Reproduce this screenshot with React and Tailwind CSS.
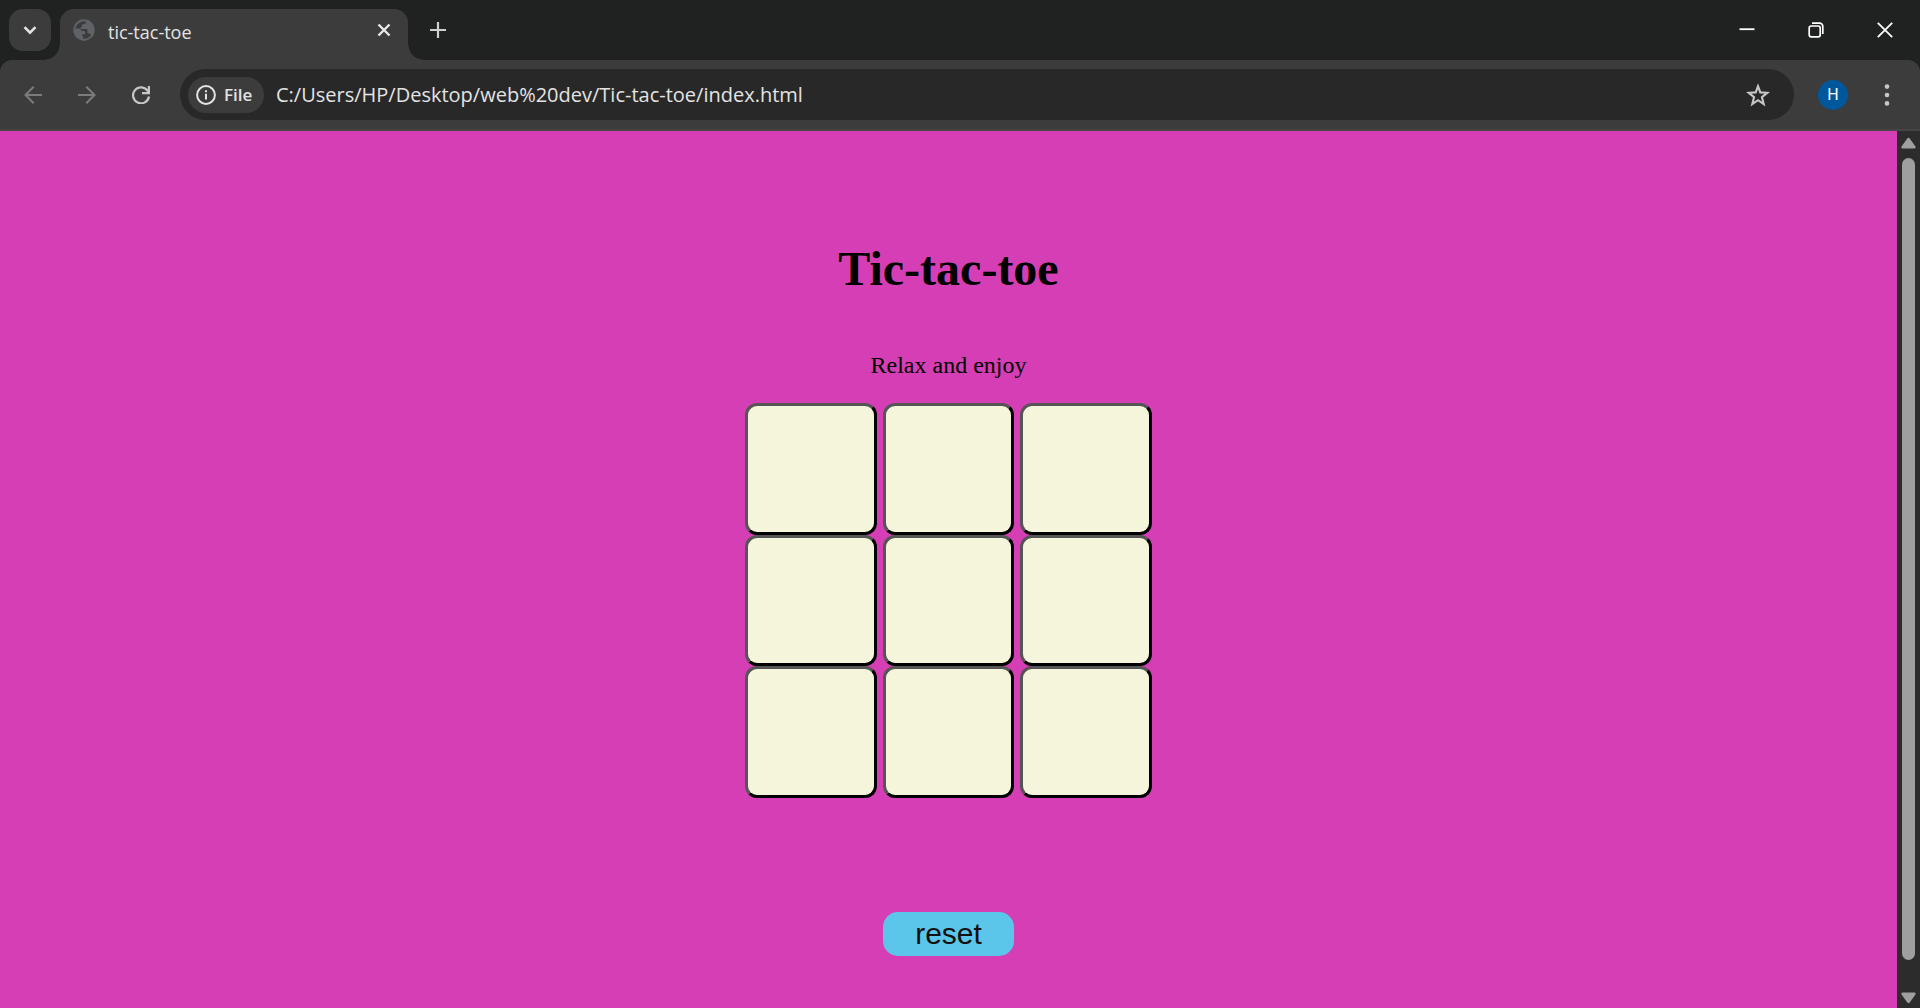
import React, { useState } from "react";

const uiFont = "font-['Segoe_UI','Open_Sans','Noto_Sans',sans-serif]";

function GlobeIcon() {
  return (
    <svg className="size-[22px]" viewBox="0 0 22 22" fill="none" aria-hidden="true">
      <circle cx="11" cy="11" r="9.7" stroke="#5f6368" strokeWidth="2" />
      <path
        d="M13 1.500v1.700c0 1.300-1 2-2.200 2H9v2c0 .8-.8 1-1.600 1.200V10H13c1 0 1.500.7 1.500 1.500v2.700h1.200c1.200 0 1.800.8 2.200 1.800l1.500.5A10 10 0 0 0 13 1.500Z"
        fill="#5f6368"
      />
      <path
        d="M1.500 9.500 6.600 14v1c0 1.300.8 2 2.200 2H10v4A10 10 0 0 1 1.500 9.500Z"
        fill="#5f6368"
      />
      <path d="M1.800 9.500h4.700l2.500 2.600h1.800c.9 0 1.400.6 1.400 1.400v1.700H10L8.500 17H5L1.800 13Z" fill="#5f6368" />
    </svg>
  );
}

function TabStrip() {
  return (
    <div className="flex h-[60px] shrink-0 items-end bg-[#202221] pl-[9px]">
      <button
        type="button"
        aria-label="Search tabs"
        className="mb-[9px] flex size-[42px] items-center justify-center rounded-[14px] bg-[#3c3c3c] text-[#e3e3e3]"
      >
        <svg className="size-[14px]" viewBox="0 0 14 14" fill="none" stroke="currentColor" strokeWidth="2.600" aria-hidden="true">
          <path d="M1.500 4.200 7 9.700l5.500-5.500" />
        </svg>
      </button>
      <div className="relative ml-[9px] flex h-[51px] w-[348px] items-center rounded-t-[14px] bg-[#3c3c3c] pr-[17px] pb-[9px] pl-[13px]">
        <span className="absolute bottom-0 -left-[15px] size-[15px] bg-[radial-gradient(circle_at_0_0,transparent_14px,#3c3c3c_15px)]" />
        <span className="absolute -right-[15px] bottom-0 size-[15px] bg-[radial-gradient(circle_at_100%_0,transparent_14px,#3c3c3c_15px)]" />
        <GlobeIcon />
        <span className="mt-1 ml-[13px] flex-1 text-[18px] leading-6 text-[#e3e3e3]">tic-tac-toe</span>
        <button type="button" aria-label="Close tab" className="text-[#e8e8e8]">
          <svg className="size-[14px]" viewBox="0 0 14 14" fill="none" stroke="currentColor" strokeWidth="2.400" aria-hidden="true">
            <path d="m1.500 1.500 11 11M12.500 1.500l-11 11" />
          </svg>
        </button>
      </div>
      <button type="button" aria-label="New tab" className="mb-[22px] ml-[22px] text-[#d0d0d0]">
        <svg className="size-4" viewBox="0 0 16 16" fill="none" stroke="currentColor" strokeWidth="2.200" aria-hidden="true">
          <path d="M8 0v16M0 8h16" />
        </svg>
      </button>
      <div className="mr-px ml-auto flex h-full text-white">
        <button type="button" aria-label="Minimize" className="flex w-[69px] items-center justify-center">
          <svg className="size-4" viewBox="0 0 16 16" aria-hidden="true">
            <path d="M.5 7.200h15" stroke="currentColor" strokeWidth="1.800" />
          </svg>
        </button>
        <button type="button" aria-label="Restore" className="flex w-[69px] items-center justify-center">
          <svg className="size-4" viewBox="0 0 16 16" fill="none" stroke="currentColor" strokeWidth="1.700" aria-hidden="true">
            <rect x="1.200" y="4" width="11" height="10.800" rx="2" />
            <path d="M4 1.200h7.500a3.300 3.300 0 0 1 3.300 3.300V12" />
          </svg>
        </button>
        <button type="button" aria-label="Close" className="flex w-[69px] items-center justify-center">
          <svg className="size-4" viewBox="0 0 16 16" fill="none" stroke="currentColor" strokeWidth="1.800" aria-hidden="true">
            <path d="m.8.8 14.400 14.400M15.200.8.8 15.200" />
          </svg>
        </button>
      </div>
    </div>
  );
}

function Toolbar() {
  return (
    <div className="shrink-0 bg-[#202221]">
      <div className="flex h-[71px] items-center rounded-t-[12px] border-b-2 border-[#454545] bg-[#3c3c3c] pr-7 pl-6">
        <button type="button" aria-label="Back" className="text-[#7c7c7c]">
          <svg className="size-[18px]" viewBox="0 0 18 18" fill="none" stroke="currentColor" strokeWidth="2" aria-hidden="true">
            <path d="M18 9H1.500M9.700.8 1.500 9l8.200 8.200" />
          </svg>
        </button>
        <button type="button" aria-label="Forward" className="ml-9 text-[#7c7c7c]">
          <svg className="size-[18px]" viewBox="0 0 18 18" fill="none" stroke="currentColor" strokeWidth="2" aria-hidden="true">
            <path d="M0 9h16.500M8.300.8 16.500 9l-8.200 8.200" />
          </svg>
        </button>
        <button type="button" aria-label="Reload" className="ml-9 text-[#c7c7c7]">
          <svg className="size-[18px]" viewBox="0 0 18 18" fill="none" stroke="currentColor" strokeWidth="2.200" aria-hidden="true">
            <path d="M17 10.500A8 8 0 1 1 15.800 5l.8 1.200M16.900 0v7.100H10" />
          </svg>
        </button>
        <div className="ml-[30px] flex h-[51px] flex-1 items-center rounded-full bg-[#282828] pr-6 pl-2">
          <button
            type="button"
            className="flex h-9 w-[76px] items-center gap-2 rounded-full bg-[#3c3c3c] pl-2 text-[17px] leading-6 font-semibold text-[#e3e3e3]"
          >
            <svg className="size-5" viewBox="0 0 20 20" fill="none" stroke="currentColor" strokeWidth="2" aria-hidden="true">
              <circle cx="10" cy="10" r="8.900" />
              <path d="M10 8.800v5.700M10 5.200v2" />
            </svg>
            File
          </button>
          <input
            type="text"
            aria-label="Address"
            defaultValue="C:/Users/HP/Desktop/web%20dev/Tic-tac-toe/index.html"
            className="ml-3 min-w-0 flex-1 bg-transparent text-[20px] leading-7 text-[#e3e3e3] outline-none"
          />
          <button type="button" aria-label="Bookmark this page" className="text-[#c7c7c7]">
            <svg className="size-6" viewBox="0 0 24 24" fill="none" stroke="currentColor" strokeWidth="2.100" aria-hidden="true">
              <path d="m12 3.200 2.300 6.200 6.900.4-5.300 4.300 1.800 6.900L12 17.200l-5.700 3.800 1.800-6.900-5.300-4.300 6.900-.4Z" />
            </svg>
          </button>
        </div>
        <button
          type="button"
          aria-label="Profile"
          className="ml-6 size-[30px] rounded-full bg-[#00579c] font-[Roboto,sans-serif] text-[16px] leading-none text-white"
        >
          H
        </button>
        <button type="button" aria-label="Menu" className="ml-[34px] text-[#c7c7c7]">
          <svg className="h-[22px] w-[10px]" viewBox="0 0 10 22" fill="currentColor" aria-hidden="true">
            <circle cx="5" cy="2.600" r="2.300" />
            <circle cx="5" cy="11" r="2.300" />
            <circle cx="5" cy="19.400" r="2.300" />
          </svg>
        </button>
      </div>
    </div>
  );
}

function Scrollbar() {
  return (
    <div className="flex w-[23px] shrink-0 flex-col items-center bg-[#2c2c2c] pt-[6px] pb-[4px] text-[#9f9f9f]" aria-hidden="true">
      <svg className="h-3 w-[15px]" viewBox="0 0 15 12" fill="currentColor">
        <path d="M6.300 1.500q1.200-1.500 2.400 0l5.600 7.800q1 2-1 2.200H1.700q-2-.2-1-2.200Z" />
      </svg>
      <div className="mt-[9px] w-[13px] flex-1 rounded-full bg-[#9f9f9f]" />
      <svg className="mt-8 h-3 w-[15px] rotate-180" viewBox="0 0 15 12" fill="currentColor">
        <path d="M6.300 1.500q1.200-1.500 2.400 0l5.600 7.800q1 2-1 2.200H1.700q-2-.2-1-2.200Z" />
      </svg>
    </div>
  );
}

function Game() {
  const [cells, setCells] = useState(Array(9).fill(""));
  const play = (i) => {
    if (cells[i]) return;
    const turn = cells.filter(Boolean).length % 2 ? "O" : "X";
    setCells(cells.map((c, n) => (n === i ? turn : c)));
  };
  return (
    <main className="flex flex-1 flex-col items-center overflow-hidden bg-[#d63eb5] pt-[110px] font-['Liberation_Serif',serif] text-black">
      <h1 className="text-[48px] leading-[56px] font-bold">Tic-tac-toe</h1>
      <p className="mt-[54px] text-[24px] leading-7">Relax and enjoy</p>
      <div className="mt-6 grid w-[407px] grid-cols-3 gap-x-1.5">
        {cells.map((cell, i) => (
          <button
            key={i}
            type="button"
            aria-label={`Cell ${i + 1}`}
            onClick={() => play(i)}
            className="aspect-square rounded-[12px] border-[3px] border-t-[#555] border-r-black border-b-black border-l-[#555] bg-[#f5f5dc] text-[60px] leading-none"
          >
            {cell}
          </button>
        ))}
      </div>
      <button
        type="button"
        onClick={() => setCells(Array(9).fill(""))}
        className="mt-[114px] h-11 w-[131px] rounded-[15px] bg-[#5bc6e9] font-['Liberation_Sans',sans-serif] text-[30px] leading-9 text-[#111]"
      >
        reset
      </button>
    </main>
  );
}

export default function App() {
  return (
    <div className={`flex h-screen flex-col overflow-hidden ${uiFont}`}>
      <TabStrip />
      <Toolbar />
      <div className="flex min-h-0 flex-1">
        <Game />
        <Scrollbar />
      </div>
    </div>
  );
}
